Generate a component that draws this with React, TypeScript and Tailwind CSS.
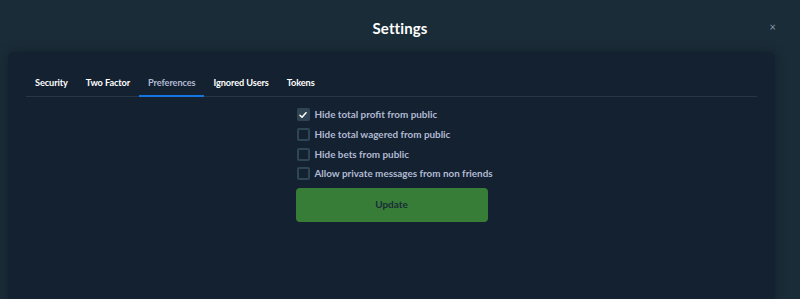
import { useState } from "react";

const tabs = ["Security", "Two Factor", "Preferences", "Ignored Users", "Tokens"];

const options = [
  { id: "profit", label: "Hide total profit from public", checked: true },
  { id: "wagered", label: "Hide total wagered from public", checked: false },
  { id: "bets", label: "Hide bets from public", checked: false },
  { id: "messages", label: "Allow private messages from non friends", checked: false },
];

const App = () => {
  const [active, setActive] = useState("Preferences");
  const [values, setValues] = useState<Record<string, boolean>>(
    Object.fromEntries(options.map((o) => [o.id, o.checked]))
  );

  return (
    <div
      className="min-h-[299px] h-[299px] overflow-hidden bg-[#1a2c38] text-white"
      style={{ fontFamily: "Lato, 'Open Sans', sans-serif" }}
    >
      {/* Header */}
      <div className="relative flex h-[52px] items-center justify-center pt-[4px]">
        <h2 className="text-[15px] font-bold tracking-[0.1px]">Settings</h2>
        <button className="absolute right-[24px] top-[21px] text-[11px] leading-none text-[#8a9aa6]">
          ×
        </button>
      </div>

      {/* Card */}
      <div className="mx-[8px] mr-[25px] h-[260px] rounded-[6px] bg-[#142130] px-[18px] pt-[23px] shadow-[0_0_12px_rgba(0,0,0,0.25)]">
        {/* Tabs */}
        <div className="flex border-b border-[#26374a]">
          {tabs.map((tab) => (
            <button
              key={tab}
              onClick={() => setActive(tab)}
              className={`-mb-px px-[9px] pb-[5px] text-[9.2px] font-bold leading-[15px] tracking-[-0.1px] ${
                active === tab
                  ? "border-b-2 border-[#1475e1] text-[#b1bad3]"
                  : "border-b-2 border-transparent text-white"
              }`}
            >
              {tab}
            </button>
          ))}
        </div>

        {/* Preferences */}
        <div className="mx-auto mt-[8px] flex w-[192px] flex-col">
          {options.map((o) => (
            <label
              key={o.id}
              className="flex h-[19.7px] cursor-pointer items-center gap-[5px] whitespace-nowrap pl-[1px]"
            >
              <span
                onClick={() => setValues({ ...values, [o.id]: !values[o.id] })}
                className={`flex h-[13px] w-[13px] shrink-0 items-center justify-center rounded-[2px] border-2 border-[#2f4553] ${
                  values[o.id] ? "bg-[#2f4553]" : "bg-transparent"
                }`}
              >
                {values[o.id] && (
                  <svg viewBox="0 0 12 12" className="h-[8px] w-[8px]" fill="none">
                    <path
                      d="M1.5 6.5 L4.5 9.5 L10.5 2.5"
                      stroke="white"
                      strokeWidth="2.2"
                      strokeLinecap="round"
                      strokeLinejoin="round"
                    />
                  </svg>
                )}
              </span>
              <span className="text-[9.9px] font-bold text-[#b1bad3]">{o.label}</span>
            </label>
          ))}

          <button className="mt-[4px] h-[34px] w-[192px] rounded-[4px] bg-[#377d37] text-[10px] font-bold text-[#1a2c38]">
            Update
          </button>
        </div>
      </div>
    </div>
  );
};

export default App;
